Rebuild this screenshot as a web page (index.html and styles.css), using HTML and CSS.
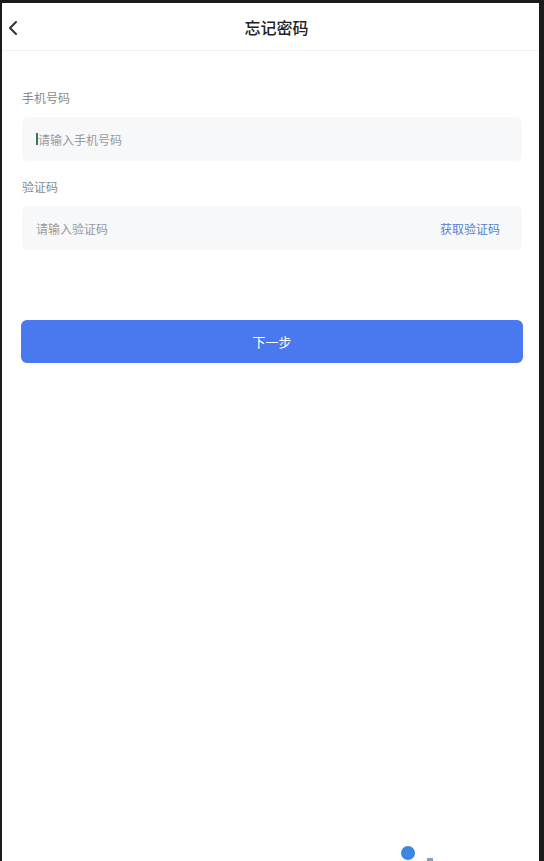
FILE: index.html
```html
<!DOCTYPE html>
<html lang="zh-CN">
<head>
<meta charset="utf-8">
<title>忘记密码</title>
<link rel="stylesheet" href="styles.css">
</head>
<body>
<div class="screen">
  <header class="nav">
    <span class="back">
      <svg width="12" height="16" viewBox="0 0 12 16"><path d="M9 2 L3 8 L9 14" fill="none" stroke="#333" stroke-width="2" stroke-linecap="round" stroke-linejoin="round"/></svg>
    </span>
    <h1 class="title">忘记密码</h1>
  </header>
  <main class="form">
    <div class="field">
      <label class="label">手机号码</label>
      <div class="input"><span class="cursor"></span><span class="ph">请输入手机号码</span></div>
    </div>
    <div class="field">
      <label class="label">验证码</label>
      <div class="input"><span class="ph">请输入验证码</span><span class="code">获取验证码</span></div>
    </div>
    <button class="next">下一步</button>
  </main>
  <div class="float">
    <span class="dot"></span>
    <span class="tail"></span>
  </div>
</div>
</body>
</html>
```
FILE: styles.css
```css
html, body {
  margin: 0;
  padding: 0;
  height: 100%;
  background: #1b1b1b;
}
body {
  font-family: "Noto Sans CJK SC", "Noto Sans", sans-serif;
  overflow: hidden;
}
.screen {
  position: relative;
  margin: 3px 5px 0 2px;
  height: 858px;
  background: #ffffff;
  overflow: hidden;
}
.nav {
  height: 47px;
  display: flex;
  align-items: center;
  justify-content: center;
  position: relative;
  border-bottom: 1px solid #f2f2f2;
}
.back {
  position: absolute;
  left: 5px;
  top: 17px;
  display: flex;
}
.title {
  margin: 0;
  font-size: 16px;
  font-weight: 500;
  color: #222;
  padding-left: 12px;
}
.form {
  padding: 38px 17px 0 20px;
}
.field {
  margin-bottom: 17px;
}
.label {
  display: block;
  font-size: 12px;
  color: #8a8a8a;
  line-height: 18px;
  margin-bottom: 10px;
}
.input {
  height: 44px;
  background: #f7f8fa;
  border-radius: 6px;
  display: flex;
  align-items: center;
  padding: 0 22px 0 14px;
  font-size: 12px;
}
.cursor {
  width: 2px;
  height: 12px;
  background: #2e7a6a;
}
.ph {
  color: #9a9a9a;
  flex: 1;
}
.code {
  color: #5a7fd0;
}
.next {
  display: block;
  width: 502px;
  height: 43px;
  margin-top: 70px;
  margin-left: -1px;
  border: none;
  border-radius: 6px;
  background: #4a78ee;
  color: #ffffff;
  font-family: inherit;
  font-size: 13px;
}
.float {
  position: absolute;
  left: 399px;
  top: 843px;
  display: flex;
  align-items: flex-end;
  gap: 12px;
}
.dot {
  width: 14px;
  height: 14px;
  border-radius: 50%;
  background: #3a86e0;
}
.tail {
  width: 6px;
  height: 3px;
  background: #8aa0b8;
  margin-bottom: -1px;
}
```
